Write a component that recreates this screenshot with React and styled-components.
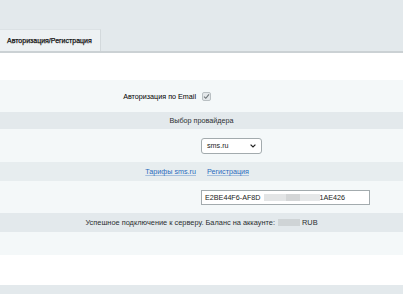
import styled, { createGlobalStyle } from "styled-components";

const Global = createGlobalStyle`
  html, body {
    margin: 0;
    padding: 0;
    background: #ffffff;
    font-family: "Liberation Sans", Arial, sans-serif;
  }
`;

const App = () => {
  return (
    <>
      <Global />
      <Page>
        <Header>
          <Tab>Авторизация/Регистрация</Tab>
        </Header>
        <Spacer $h={27} $bg="#ffffff" />
        <Row $h={32}>
          <Label>Авторизация по Email</Label>
          <Value>
            <Check>
              <svg width="7" height="7" viewBox="0 0 7 7">
                <path d="M1 3.6 L2.8 5.3 L6 1.4" fill="none" stroke="#6d7478" strokeWidth="1.1" />
              </svg>
            </Check>
          </Value>
        </Row>
        <Heading $h={17}>Выбор провайдера</Heading>
        <Row $h={33}>
          <Label />
          <Value>
            <Select>
              <span>sms.ru</span>
              <svg width="6" height="4" viewBox="0 0 6 4">
                <path d="M0.6 0.6 L3 3 L5.4 0.6" fill="none" stroke="#222" strokeWidth="1.2" />
              </svg>
            </Select>
          </Value>
        </Row>
        <Row $h={19} $bg="#e7edef">
          <Label>
            <Link>Тарифы sms.ru</Link>
          </Label>
          <Value $pad={6}>
            <Link>Регистрация</Link>
          </Value>
        </Row>
        <Row $h={32}>
          <Label />
          <Value>
            <Input>
              <span>E2BE44F6-AF8D</span>
              <Blur $w={22} $c="#e3e5e6" $ml={3} />
              <Blur $w={14} $c="#d4d6d7" />
              <Blur $w={20} $c="#e6e8e9" />
              <span>1AE426</span>
            </Input>
          </Value>
        </Row>
        <Heading $h={19} $size={7.4}>
          Успешное подключение к серверу. Баланс на аккаунте:
          <Blur $w={22} $c="#cfd4d6" $ml={3} $mr={2} />
          RUB
        </Heading>
        <Spacer $h={23} $bg="#f4f8f9" />
        <Spacer $h={30} $bg="#ffffff" />
        <Spacer $h={9} $bg="#e3e9ec" />
      </Page>
    </>
  );
};

const Page = styled.div`
  width: 403px;
  height: 294px;
  overflow: hidden;
  font-size: 7.2px;
  color: #000;
`;

const Header = styled.div`
  height: 51px;
  display: flex;
  align-items: flex-end;
  background: #e3e9ec;
  border-bottom: 2px solid #cbd1d4;
`;

const Tab = styled.div`
  width: 101px;
  height: 22px;
  padding-left: 7px;
  display: flex;
  align-items: center;
  white-space: nowrap;
  background: #edf1f3;
  border-right: 1px solid #d3d9dc;
  border-top: 1px solid #dce2e5;
  font-size: 7px;
  color: #111;
  -webkit-text-stroke: 0.25px #111;
  box-sizing: border-box;
`;

const Spacer = styled.div`
  height: ${(p) => p.$h}px;
  background: ${(p) => p.$bg};
`;

const Row = styled.div`
  height: ${(p) => p.$h}px;
  display: grid;
  grid-template-columns: 201px 1fr;
  align-items: center;
  white-space: nowrap;
  background: ${(p) => p.$bg || "#f4f8f9"};
`;

const Label = styled.div`
  text-align: right;
  padding-right: 5px;
`;

const Value = styled.div`
  display: flex;
  align-items: center;
  padding-left: ${(p) => p.$pad || 0}px;
`;

const Heading = styled.div`
  height: ${(p) => p.$h}px;
  display: flex;
  align-items: center;
  justify-content: center;
  white-space: nowrap;
  font-size: ${(p) => p.$size || 7.2}px;
  background: #e3e9ec;
  color: #2b2f31;
`;

const Check = styled.div`
  width: 9px;
  height: 9px;
  margin-left: 1px;
  display: flex;
  align-items: center;
  justify-content: center;
  border: 1px solid #b9c0c3;
  border-radius: 2px;
  background: #e4e8ea;
  box-sizing: border-box;
`;

const Select = styled.div`
  width: 61px;
  height: 16px;
  padding: 0 5px 0 5px;
  display: flex;
  align-items: center;
  justify-content: space-between;
  border: 1px solid #a3abae;
  border-radius: 3px;
  background: #fff;
  box-sizing: border-box;
  color: #222;
`;

const Link = styled.span`
  color: #2a6bbd;
  text-decoration: underline;
  text-decoration-color: rgba(42, 107, 189, 0.35);
`;

const Input = styled.div`
  width: 169px;
  height: 15px;
  padding-left: 3px;
  display: flex;
  align-items: center;
  border: 1px solid #a3abae;
  background: #fff;
  box-sizing: border-box;
  color: #222;
`;

const Blur = styled.span`
  display: inline-block;
  width: ${(p) => p.$w}px;
  height: 7px;
  margin-left: ${(p) => p.$ml || 0}px;
  margin-right: ${(p) => p.$mr || 0}px;
  background: ${(p) => p.$c};
  filter: blur(0.6px);
`;

export default App;
